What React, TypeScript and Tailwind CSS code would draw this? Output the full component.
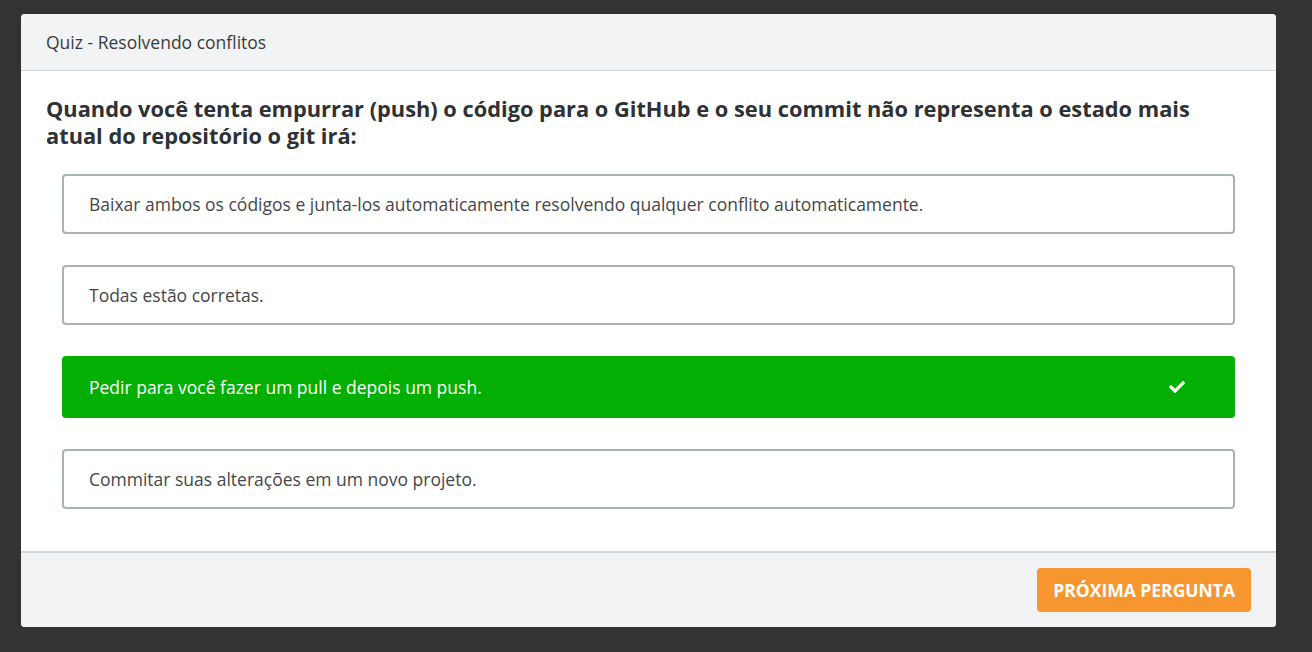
import React, { useState } from "react";
import { FaCheck } from "react-icons/fa";

interface Option {
  id: number;
  text: string;
}

const options: Option[] = [
  {
    id: 1,
    text: "Baixar ambos os códigos e junta-los automaticamente resolvendo qualquer conflito automaticamente.",
  },
  { id: 2, text: "Todas estão corretas." },
  { id: 3, text: "Pedir para você fazer um pull e depois um push." },
  { id: 4, text: "Commitar suas alterações em um novo projeto." },
];

const App: React.FC = () => {
  const [selected, setSelected] = useState<number>(3); // resposta escolhida

  return (
    <div className="w-full h-[652px] bg-[#333333] pt-[14px] pl-[21px] font-['Open_Sans',sans-serif]">
      <div className="w-[1255px] rounded-[4px] overflow-hidden bg-white">
        {/* cabeçalho */}
        <div className="h-[57px] flex items-center px-[25px] bg-[#f2f3f5] border-b border-[#d3d6d9]">
          <span className="text-[17.5px] text-[#3a3d40]">Quiz - Resolvendo conflitos</span>
        </div>

        <div className="px-[25px] pt-[24px] pb-[42px]">
          <h1 className="text-[21.8px] leading-[27px] font-bold text-[#2e3135]">
            Quando você tenta empurrar (push) o código para o GitHub e o seu commit não representa o
            estado mais atual do repositório o git irá:
          </h1>

          <div className="flex flex-col gap-[31px] mt-[25px] px-[16px]">
            {options.map((option) =>
              option.id === selected ? (
                <div
                  key={option.id}
                  className="h-[62px] flex items-center justify-between pl-[27px] pr-[50px] rounded-[4px] bg-[#02af02] text-white text-[17.5px] cursor-pointer"
                  onClick={() => setSelected(option.id)}
                >
                  <span>{option.text}</span>
                  <FaCheck className="w-[16px] h-[16px]" />
                </div>
              ) : (
                <div
                  key={option.id}
                  className="h-[60px] flex items-center pl-[25px] pr-[25px] rounded-[4px] border-2 border-[#aab1b9] text-[#44474a] text-[17.5px] cursor-pointer"
                  onClick={() => setSelected(option.id)}
                >
                  <span>{option.text}</span>
                </div>
              )
            )}
          </div>
        </div>

        {/* rodapé */}
        <div className="flex justify-end pt-[15px] pb-[15px] px-[25px] bg-[#f2f3f5] border-t-2 border-[#d3d6d9]">
          <div className="flex items-center justify-center h-[44px] px-[16px] rounded-[4px] bg-[#f8972f] text-white text-[17.5px] font-bold cursor-pointer">
            PRÓXIMA PERGUNTA
          </div>
        </div>
      </div>
    </div>
  );
};

export default App;
